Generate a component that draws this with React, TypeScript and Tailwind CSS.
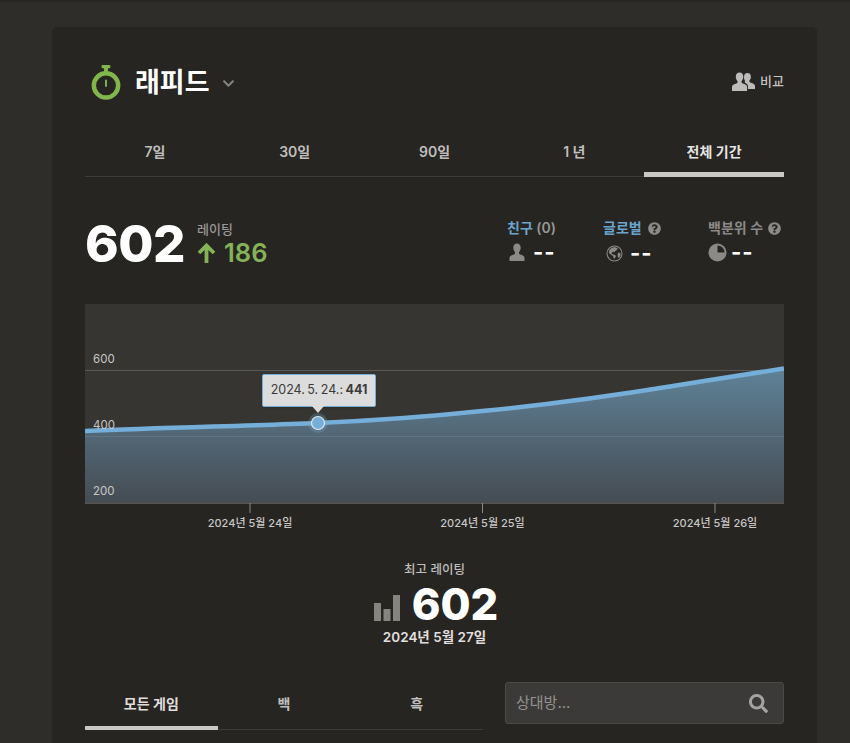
import React from 'react';
import { FaQuestionCircle, FaSearch, FaChevronDown } from 'react-icons/fa';

const KR = "font-['Inter','Noto_Sans_CJK_KR',sans-serif]";

const periods = ['7일', '30일', '90일', '1 년', '전체 기간'];

const Person = ({ className }: { className?: string }) => (
  <svg viewBox="0 0 16 18" className={className} fill="currentColor">
    <path d="M8 0.5c2.4 0 3.7 1.9 3.7 4.2 0 1.9-.8 3.4-1.7 4.3v1.2c0 .7 1 1.1 2.6 1.7 1.9.7 2.9 1.5 2.9 3.1V18H.5v-2.9c0-1.6 1-2.4 2.9-3.1C5 11.4 6 11 6 10.2V9c-.9-.9-1.7-2.4-1.7-4.3C4.3 2.4 5.6.5 8 .5z" />
  </svg>
);

const CompareIcon = () => (
  <svg viewBox="0 0 24 19" className="h-[19px] w-[24px] text-[#bdbcba]" fill="currentColor">
    <path d="M15.5 1c2.2 0 3.4 1.7 3.4 3.8 0 1.7-.7 3-1.5 3.8v1c0 .7.9 1 2.3 1.5 1.8.7 3.3 1.4 3.3 3V17h-7v-2.6c0-2-1.6-3-3.1-3.6V8.6C12.2 7.8 12 6.5 12 4.8 12 2.7 13.3 1 15.5 1z" />
    <path d="M7.5 0.5c2.500 0 3.800 1.900 3.800 4.200 0 1.900-.8 3.400-1.700 4.300v1.200c0 .7 1 1.100 2.600 1.700 1.900.7 2.900 1.500 2.900 3.100V19H0v-3.900c0-1.600 1-2.400 2.900-3.100 1.600-.6 2.600-1 2.600-1.800V9c-.9-.9-1.700-2.400-1.700-4.300 0-2.300 1.200-4.200 3.700-4.200z" />
  </svg>
);

const Stopwatch = () => (
  <svg viewBox="0 0 30 36" className="h-[35px] w-[30px]">
    <rect x="10.5" y="0" width="9" height="3.4" rx="1" fill="#81b64c" />
    <rect x="13" y="3" width="4" height="4" fill="#81b64c" />
    <circle cx="15" cy="21" r="12.5" fill="none" stroke="#81b64c" strokeWidth="4.6" />
    <rect x="14" y="15" width="2" height="7.5" rx="1" fill="#81b64c" />
  </svg>
);

const GlobeIcon = () => (
  <svg viewBox="0 0 18 18" className="h-[17px] w-[17px] text-[#8b8a88]">
    <circle cx="9" cy="9" r="7.9" fill="none" stroke="currentColor" strokeWidth="1.1" />
    <path
      fill="currentColor"
      d="M6 2.9c1.6-.7 3.6-.8 5.200-.1l1.500 1.300-1.300.6-.4 1.400-1.500.3-.3 1.400-1.700-.6-1.400.7.3 1.500 1.600 1 1.900.2.500 1.600-1.200 2.300-1-.4-.6-2.300-2-1.400L3 8.500l.5-3.300zM13 8l2.300.4.100 2.500-1.500 2.700-1.300-.5-.4-2.800z"
    />
  </svg>
);

const PieIcon = () => (
  <svg viewBox="0 0 19 19" className="h-[19px] w-[19px]">
    <circle cx="9.500" cy="9.500" r="9" fill="#8b8a88" />
    <path d="M9.500 2.500a7 7 0 0 1 7 7h-7z" fill="#262522" />
  </svg>
);

const Chart = () => {
  const line =
    'M0 127 C 80 123.500 160 122 233 119 C 290 116.500 350 112 397 107 C 450 102 520 93 588 82 C 625 76 665 70 699 64.500';
  return (
    <div className="relative h-[226px] w-full">
      <svg viewBox="0 0 699 226" className="block h-[226px] w-[699px]">
        <defs>
          <linearGradient id="area" x1="0" y1="64" x2="0" y2="199" gradientUnits="userSpaceOnUse">
            <stop offset="0" stopColor="#5f8298" />
            <stop offset="1" stopColor="#454c53" />
          </linearGradient>
        </defs>
        <rect x="0" y="0" width="699" height="199" fill="#363531" />
        <rect x="0" y="66" width="699" height="1" fill="#5a5955" />
        <path d={`${line} L699 199 L0 199 Z`} fill="url(#area)" />
        <rect x="0" y="132" width="699" height="1" fill="#ffffff" fillOpacity="0.09" />
        <path d={line} fill="none" stroke="#75afd9" strokeWidth="4.500" />
        <rect x="0" y="198.500" width="699" height="1.500" fill="#55534f" />
        <circle cx="233" cy="119" r="10" fill="#75afd9" fillOpacity="0.25" />
        <circle cx="233" cy="119" r="6.500" fill="#75afd9" stroke="#e4e6e8" strokeWidth="1.200" />
        <g fill="#c8c7c5" fontSize="11" fontFamily="Inter, 'Noto Sans CJK KR', sans-serif">
          <text x="8" y="59" fontSize="11.500">600</text>
          <text x="8" y="125" fontSize="11.500">400</text>
          <text x="8" y="191" fontSize="11.500">200</text>
          <text x="165" y="223" textAnchor="middle" fontWeight="500">2024년 5월 24일</text>
          <text x="397.500" y="223" textAnchor="middle" fontWeight="500">2024년 5월 25일</text>
          <text x="630" y="223" textAnchor="middle" fontWeight="500">2024년 5월 26일</text>
        </g>
        <g fill="#8b8a88">
          <rect x="164.500" y="199" width="1" height="10" />
          <rect x="397" y="199" width="1" height="10" />
          <rect x="629.500" y="199" width="1" height="10" />
        </g>
      </svg>
      {/* tooltip sits over the plot */}
      <div className="absolute left-[177px] top-[70px] flex h-[33px] w-[114px] items-center justify-center rounded-[2px] border border-[#75afd9] bg-[#dcdcdc] text-[12.5px] text-[#3b3a38] shadow-sm [word-spacing:-1px]">
        <span>
          2024. 5. 24.: <b>441</b>
        </span>
        <div className="absolute left-[49px] top-[31px] h-0 w-0 border-x-[6px] border-t-[7px] border-x-transparent border-t-[#dcdcdc]" />
      </div>
    </div>
  );
};

export default function App() {
  return (
    <div className={`${KR} h-[743px] w-[850px] overflow-hidden bg-[#2e2d29]`}>
      <div className="h-[2px] bg-[#262522]" />
      <div className="ml-[52px] mt-[25px] h-[716px] w-[765px] rounded-t-[5px] bg-[#262522] px-[33px]">
        {/* header */}
        <div className="flex h-[103px] items-end justify-between pb-[30px] pl-[6px]">
          <div className="flex items-center">
            <Stopwatch />
            <span className="ml-[14px] text-[27px] font-bold leading-[35px] text-white">래피드</span>
            <FaChevronDown className="ml-[12px] mt-[1px] h-[13px] w-[13px] text-[#85847f]" />
          </div>
          <div className="mb-[9px] flex items-center gap-[4px] text-[13px] font-medium text-[#c4c3c1]">
            <CompareIcon />
            <span>비교</span>
          </div>
        </div>

        {/* period tabs */}
        <div className="flex h-[47px] border-b border-[#3d3c38]">
          {periods.map((p, i) => (
            <div
              key={p}
              className={`flex h-[47px] w-[140px] items-center justify-center text-[14px] font-semibold ${
                i === 4 ? 'border-b-[5px] border-[#c8c8c6] text-[#e6e5e3]' : 'pb-[5px] text-[#bfbebc]'
              }`}
            >
              {p}
            </div>
          ))}
        </div>

        {/* rating row */}
        <div className="flex h-[127px] justify-between pt-[37px]">
          <div className="flex items-start">
            <span className="text-[51px] font-extrabold leading-[60px] tracking-[-0.5px] text-white">602</span>
            <div className="ml-[12px] mt-[6px]">
              <div className="text-[13px] font-medium leading-[18px] text-[#989795]">레이팅</div>
              <div className="flex items-center gap-[8px] text-[25.500px] font-semibold leading-[30px] text-[#86b358]">
                <svg viewBox="0 0 18 20" className="h-[20px] w-[19px]" fill="none" stroke="currentColor" strokeWidth="3.800">
                  <path d="M9 20V3M1.500 10 9 2.500l7.500 7.500" />
                </svg>
                186
              </div>
            </div>
          </div>
          <div className="mt-[4px] flex items-start pr-[2px]">
            <div className="w-[96px]">
              <div className="text-[14px] font-semibold leading-[20px] text-[#989795]">
                <span className="text-[#6ba3cc]">친구</span> (0)
              </div>
              <div className="mt-[4px] flex items-center gap-[8px] pl-[2px]">
                <Person className="h-[18px] w-[16px] text-[#8b8a88]" />
                <span className="text-[22px] font-bold leading-[20px] tracking-[1px] text-white">--</span>
              </div>
            </div>
            <div className="w-[105px]">
              <div className="flex items-center gap-[6px] text-[14px] font-semibold leading-[20px] text-[#6ba3cc]">
                글로벌 <FaQuestionCircle className="h-[13px] w-[13px] text-[#8b8a88]" />
              </div>
              <div className="mt-[5px] flex items-center gap-[7px] pl-[3px]">
                <GlobeIcon />
                <span className="text-[22px] font-bold leading-[20px] tracking-[1px] text-white">--</span>
              </div>
            </div>
            <div className="w-[74px]">
              <div className="flex items-center gap-[5px] text-[14px] font-semibold leading-[20px] text-[#8b8a88]">
                백분위 수 <FaQuestionCircle className="h-[13px] w-[13px]" />
              </div>
              <div className="mt-[4px] flex items-center gap-[4px]">
                <PieIcon />
                <span className="text-[22px] font-bold leading-[20px] tracking-[1px] text-white">--</span>
              </div>
            </div>
          </div>
        </div>

        <Chart />

        {/* best rating */}
        <div className="mt-[32px] flex flex-col items-center">
          <div className="text-[12.500px] font-medium leading-[16px] text-[#bfbebc]">최고 레이팅</div>
          <div className="ml-[3px] mt-[4px] flex items-end">
            <svg viewBox="0 0 26 26" className="mb-[5px] mr-[12px] h-[26px] w-[26px]" fill="#85847f">
              <rect x="0" y="8" width="7" height="18" />
              <rect x="9.500" y="14" width="7" height="12" />
              <rect x="19" y="0" width="7" height="26" />
            </svg>
            <span className="text-[43.500px] font-extrabold leading-[44px] text-white">602</span>
          </div>
          <div className="mt-[2px] text-[13.500px] font-semibold leading-[18px] text-[#e0dfdd]">2024년 5월 27일</div>
        </div>

        {/* game filter + search */}
        <div className="mt-[36px] flex items-start justify-between">
          <div className="flex h-[48px] w-[398px] border-b border-[#3d3c38]">
            {['모든 게임', '백', '흑'].map((t, i) => (
              <div
                key={t}
                className={`flex h-[48px] w-[132.660px] items-center justify-center text-[14px] font-semibold text-[#bfbebc] ${
                  i === 0 ? 'border-b-[4px] border-[#c8c8c6] pb-[2px] text-[#e0dfdd]' : 'pb-[6px]'
                }`}
              >
                {t}
              </div>
            ))}
          </div>
          <div className="flex h-[42px] w-[279px] items-center justify-between rounded-[3px] border border-[#4a4946] bg-[#3b3a38] pl-[10px] pr-[15px]">
            <span className="text-[15px] text-[#93928f]">상대방...</span>
            <FaSearch className="h-[19px] w-[19px] text-[#a4a3a1]" />
          </div>
        </div>
      </div>
    </div>
  );
}
